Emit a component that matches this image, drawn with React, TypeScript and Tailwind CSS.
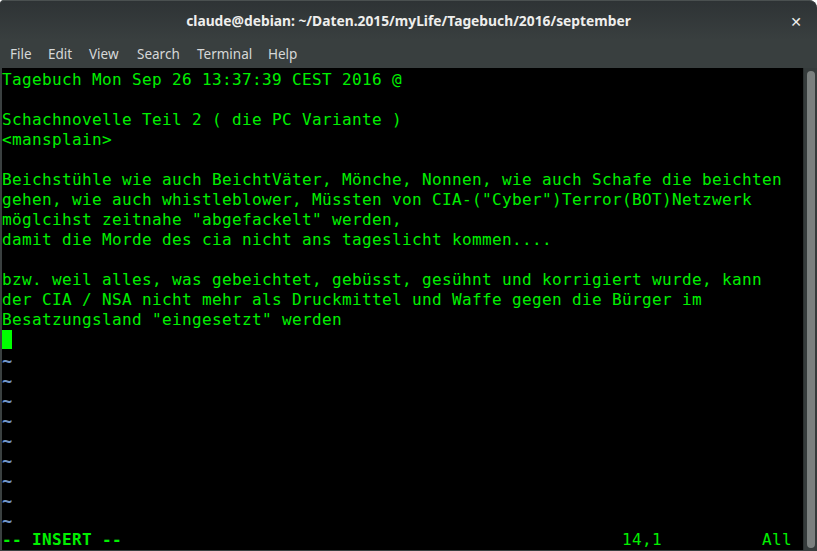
import React from 'react';

const lines: { text: string; kind?: 'text' | 'tilde' | 'cursor' }[] = [
  { text: 'Tagebuch Mon Sep 26 13:37:39 CEST 2016 @' },
  { text: '' },
  { text: 'Schachnovelle Teil 2 ( die PC Variante )' },
  { text: '<mansplain>' },
  { text: '' },
  { text: 'Beichstühle wie auch BeichtVäter, Mönche, Nonnen, wie auch Schafe die beichten' },
  { text: 'gehen, wie auch whistleblower, Müssten von CIA-("Cyber")Terror(BOT)Netzwerk' },
  { text: 'möglcihst zeitnahe "abgefackelt" werden,' },
  { text: 'damit die Morde des cia nicht ans tageslicht kommen....' },
  { text: '' },
  { text: 'bzw. weil alles, was gebeichtet, gebüsst, gesühnt und korrigiert wurde, kann' },
  { text: 'der CIA / NSA nicht mehr als Druckmittel und Waffe gegen die Bürger im' },
  { text: 'Besatzungsland "eingesetzt" werden' },
  { text: '', kind: 'cursor' },
  ...Array.from({ length: 9 }, () => ({ text: '~', kind: 'tilde' as const })),
];

const menus = ['File', 'Edit', 'View', 'Search', 'Terminal', 'Help'];

export default function App() {
  return (
    <div className="w-[817px] h-[551px] bg-white overflow-hidden">
      <div className="w-full h-full flex flex-col bg-[#393f3f] rounded-tl-[4px] rounded-tr-[8px] overflow-hidden">
        {/* Header bar */}
        <div className="h-[40px] relative flex items-center justify-center bg-gradient-to-b from-[#2e3335] to-[#393f3f] border-t border-[#4a5050] rounded-tl-[4px] rounded-tr-[8px]">
          <span className="text-[13.8px] font-bold text-[#eeeeec] font-['Noto_Sans',sans-serif] pt-[1px]">
            claude@debian: ~/Daten.2015/myLife/Tagebuch/2016/september
          </span>
          <span className="absolute right-[15px] top-[11px] text-[#eeeeec] text-[14px] font-bold font-['DejaVu_Sans',sans-serif]">
            ✕
          </span>
        </div>

        {/* Menu bar */}
        <div className="h-[28px] flex items-center pl-[10px] text-[13.5px] text-[#d6d8d8] font-['Noto_Sans',sans-serif]">
          <span className="w-[38px]">File</span>
          <span className="w-[41px]">Edit</span>
          <span className="w-[48px]">View</span>
          <span className="w-[60px]">Search</span>
          <span className="w-[71px]">Terminal</span>
          <span>Help</span>
        </div>

        {/* Terminal body */}
        <div className="flex-1 flex min-h-0">
          <div className="w-[2px] bg-[#3a4040]" />
          <div className="w-[801px] bg-black pt-[2px] font-['DejaVu_Sans_Mono',monospace] text-[16px] tracking-[0.367px] text-[#00f000]">
            {lines.map((l, i) => (
              <div key={i} className="h-[20px] leading-[20px] whitespace-pre">
                {l.kind === 'cursor' ? (
                  <span className="inline-block w-[10px] h-[19px] bg-[#00ff00] align-top" />
                ) : l.kind === 'tilde' ? (
                  <span className="text-[#7296c8] font-bold text-[17px] relative top-[1px]">{l.text}</span>
                ) : (
                  l.text
                )}
              </div>
            ))}
            <div className="h-[20px] leading-[20px] whitespace-pre flex">
              <span className="font-bold w-[620px]">-- INSERT --</span>
              <span className="w-[140px]">14,1</span>
              <span>All</span>
            </div>
          </div>
          <div className="w-[14px] bg-[#353b3b] pt-[3px] pb-[2px] flex justify-center border-l border-[#2a2f2f]">
            <div className="w-[8px] h-full rounded-full bg-[#7b807f]" />
          </div>
        </div>
        <div className="h-[1px] bg-[#3a4040]" />
      </div>
    </div>
  );
}
